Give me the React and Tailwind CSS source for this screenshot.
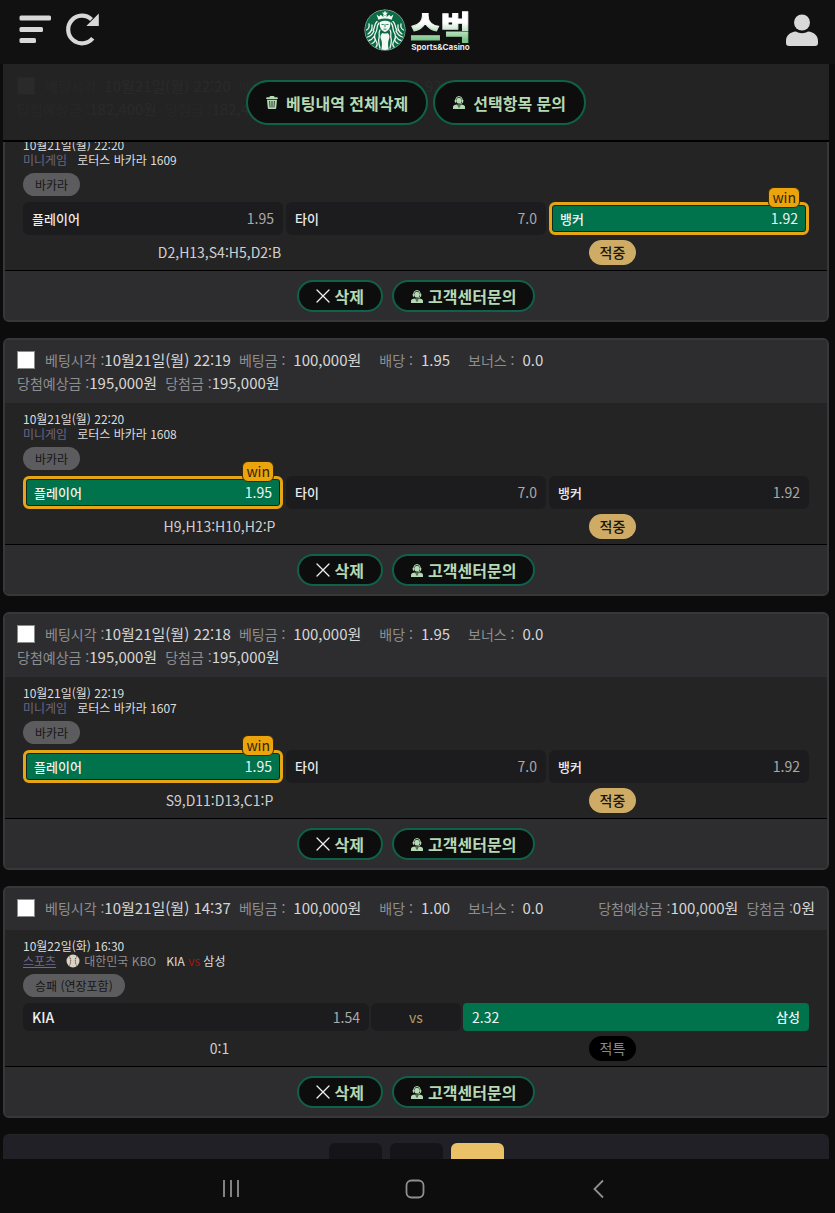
import React from "react";

const bets = [
  {
    id: "b1",
    placed: "10월21일(월) 22:20",
    stake: "95,000원",
    odds: "1.92",
    expected: "182,400원",
    paid: "182,400원",
    start: "10월21일(월) 22:20",
    round: "로터스 바카라 1609",
    winner: 2,
    score: "D2,H13,S4:H5,D2:B",
  },
  {
    id: "b2",
    placed: "10월21일(월) 22:19",
    stake: "100,000원",
    odds: "1.95",
    expected: "195,000원",
    paid: "195,000원",
    start: "10월21일(월) 22:20",
    round: "로터스 바카라 1608",
    winner: 0,
    score: "H9,H13:H10,H2:P",
  },
  {
    id: "b3",
    placed: "10월21일(월) 22:18",
    stake: "100,000원",
    odds: "1.95",
    expected: "195,000원",
    paid: "195,000원",
    start: "10월21일(월) 22:19",
    round: "로터스 바카라 1607",
    winner: 0,
    score: "S9,D11:D13,C1:P",
  },
  {
    id: "b4",
    sport: true,
    placed: "10월21일(월) 14:37",
    stake: "100,000원",
    odds: "1.00",
    expected: "100,000원",
    paid: "0원",
    start: "10월22일(화) 16:30",
    score: "0:1",
  },
];

const outcomes = [
  { name: "플레이어", odds: "1.95" },
  { name: "타이", odds: "7.0" },
  { name: "뱅커", odds: "1.92" },
];

function TrashIcon() {
  return (
    <svg width="12" height="13" viewBox="0 0 12 13" aria-hidden="true">
      <path
        fill="currentColor"
        fillRule="evenodd"
        d="M4 0h4l.6 1.2H11a.8.8 0 0 1 .8.8v1H.2V2a.8.8 0 0 1 .8-.8h2.4zM1 3.700h10l-.8 8.300a1 1 0 0 1-1 1H2.800a1 1 0 0 1-1-1zM3.300 5l.4 6.500h.7L4.100 5zm2.300 0v6.500h.8V5zm2.300 0-.3 6.500h.7L8.700 5z"
      />
    </svg>
  );
}

function AgentIcon() {
  return (
    <svg width="12" height="13" viewBox="0 0 12 13" aria-hidden="true">
      <path fill="none" stroke="currentColor" strokeWidth="1" d="M2.700 5V4a3.300 3.500 0 0 1 6.600 0v1" />
      <rect x="1.800" y="3.700" width="1.600" height="3" rx=".6" fill="currentColor" />
      <rect x="8.600" y="3.700" width="1.600" height="3" rx=".6" fill="currentColor" />
      <ellipse cx="6" cy="4.700" rx="2.500" ry="2.900" fill="currentColor" />
      <path fill="none" stroke="currentColor" strokeWidth=".8" d="M9.500 6.300c0 1.200-1 1.500-2.600 1.500" />
      <path fill="currentColor" d="M4.500 8.500 5.500 13H0v-1.900c0-1.500 1.300-2.300 4.500-2.600zM7.500 8.500 6.500 13H12v-1.900c0-1.500-1.300-2.300-4.500-2.600zM5.200 8.400h1.600l-.4 1.400.3 3.200H5.300l.3-3.200z" />
    </svg>
  );
}

function CloseIcon() {
  return (
    <svg width="14" height="14" viewBox="0 0 14 14" aria-hidden="true">
      <path d="m1 1 12 12M13 1 1 13" stroke="#f0f0f0" strokeWidth="1.300" strokeLinecap="round" />
    </svg>
  );
}

function BallIcon() {
  return (
    <svg width="14" height="14" viewBox="0 0 14 14" aria-hidden="true">
      <circle cx="7" cy="7" r="6.500" fill="#d9d2c6" />
      <path
        d="M3.200 2.300c2 2.800 2 6.600 0 9.400M10.800 2.300c-2 2.800-2 6.600 0 9.400"
        fill="none"
        stroke="#6b4a3c"
        strokeWidth="1"
        strokeDasharray="1.200 .6"
      />
    </svg>
  );
}

function Emblem() {
  return (
    <svg width="42" height="42" viewBox="0 0 42 42" aria-hidden="true">
      <circle cx="21" cy="21" r="20.500" fill="#b9d4c6" />
      <circle cx="21" cy="21" r="20" fill="#0c6a44" />
      <g fill="none" stroke="#eef5f0" strokeLinecap="round" strokeWidth="1.300">
        <path d="M15 14c-3 3-1 6-3 9s-2 6 0 9 1 5 0 6" />
        <path d="M27 14c3 3 1 6 3 9s2 6 0 9-1 5 0 6" />
        <path d="M16 21c-2 3 0 5-1 8s0 6 1 10" />
        <path d="M26 21c2 3 0 5 1 8s0 6-1 10" />
        <path d="M13 12.500c-3.500 3-1.500 6-4 9" />
        <path d="M29 12.500c3.500 3 1.500 6 4 9" />
        <path d="M2.500 21c2-1 3-3.500 2.500-6M4 25c3-2 4.500-5 4-9M3.500 28c3.500-1 5-3 6.500-6M5 31.500c2-.5 3.500-1.500 5-4M8 34.500c1.500-.5 2.500-1.500 3.500-3.500" />
        <path d="M39.500 21c-2-1-3-3.500-2.500-6M38 25c-3-2-4.500-5-4-9M38.500 28c-3.500-1-5-3-6.500-6M37 31.500c-2-.5-3.500-1.500-5-4M34 34.500c-1.500-.5-2.500-1.500-3.500-3.500" />
      </g>
      <path
        fill="#f3f8f5"
        d="m21 1.500.9 2.100 2.200.1-1.700 1.400.6 2.200-2-1.200-2 1.200.6-2.200-1.700-1.400 2.200-.1zM12.500 5.500l2.700 2 1.600-1.700 2.200 2 2-1.600 2 1.600 2.200-2 1.600 1.700 2.700-2-1.900 5.300c-4-1.600-9.200-1.600-13.200 0z"
      />
      <path fill="#f3f8f5" d="M16 13c3-1.800 7-1.800 10 0 .8 4-.2 8.300-5 10-4.800-1.700-5.800-6-5-10z" />
      <path d="M17.500 15.500h2.300M22.200 15.500h2.300M21 15v3.200M19.500 20.200h3" stroke="#0c6a44" strokeWidth=".8" fill="none" />
      <path fill="#f3f8f5" d="M18.500 24c1.500.8 3.500.8 5 0 2.700 2 2.200 5 1 7.500-.7 2.500-.5 6 .2 9.100-2.500.5-5 .5-7.400 0 .7-3.100.9-6.600.2-9.100-1.200-2.500-1.700-5.500 1-7.500z" />
    </svg>
  );
}

function Brand() {
  return (
    <a href="#home" aria-label="스벅 Sports&Casino" className="flex items-center gap-1">
      <Emblem />
      <span className="flex flex-col items-center">
        <span className="bg-linear-to-b from-white from-40% to-[#7cc68a] to-90% bg-clip-text text-[33px] leading-[34px] font-black text-transparent [-webkit-text-stroke:1px_transparent]">
          스벅
        </span>
        <span className="font-[Inter] text-[8px] leading-2 font-bold text-[#e8e8e8]">Sports&amp;Casino</span>
      </span>
    </a>
  );
}

function ActionButton({ icon, children, large }) {
  return (
    <button
      type="button"
      className={
        large
          ? "flex h-[45px] items-center gap-2 rounded-full border-2 border-[#0f6248] bg-[#0d0d0d] px-[18px] text-[16px] font-bold text-[#b5dab3]"
          : "flex h-8 items-center gap-[5px] rounded-full border-2 border-[#0f6248] bg-[#0d0d0d] px-[17px] text-[16px] font-bold text-[#b5dab3]"
      }
    >
      {icon}
      <span>{children}</span>
    </button>
  );
}

function Outcome({ name, odds, won }) {
  if (won) {
    return (
      <div className="relative flex items-center justify-between rounded-md border-3 border-[#e7a414] bg-[#00734c] px-2 text-[14px] text-[#f2f2f2] inset-ring inset-ring-[#10281f]">
        <span className="text-[13px] font-medium">{name}</span>
        <span>{odds}</span>
        <span className="absolute -top-[18px] right-[6px] flex h-[21px] items-center rounded-md border border-[#3a2a08] bg-[#eba40c] px-[3px] text-[14px] text-[#33230a]">
          win
        </span>
      </div>
    );
  }
  return (
    <div className="flex items-center justify-between rounded-md bg-[#1c1c1e] px-[9px] text-[14px] text-[#a9a9a9]">
      <span className="text-[13px] font-medium text-[#ececec]">{name}</span>
      <span>{odds}</span>
    </div>
  );
}

function Field({ label, value, spaced }) {
  return (
    <span className={spaced ? "flex h-[23px] items-baseline gap-2" : "flex h-[23px] items-baseline"}>
      <span className="text-[#8d8d8f]">{label} :</span>
      <span className="text-[15px] text-[#d6d6d6]">{value}</span>
    </span>
  );
}

function BetCard({ bet }) {
  return (
    <article className="shrink-0 overflow-hidden rounded-md border-2 border-[#38383a] bg-[#242424]">
      <header className="flex min-h-[42px] flex-wrap content-start justify-between gap-x-8 bg-[#2d2d2f] px-3 pt-2 pb-[9px] text-[14px] leading-[23px]">
        <div className="flex items-center">
          <input
            id={bet.id}
            type="checkbox"
            className="mr-[10px] size-[18px] appearance-none border border-[#8a8a8a] bg-white"
          />
          <label htmlFor={bet.id} className="mr-2">
            <Field label="베팅시각" value={bet.placed} />
          </label>
          <div className="flex gap-[18px]">
            <Field label="베팅금" value={bet.stake} spaced />
            <Field label="배당" value={bet.odds} spaced />
            <Field label="보너스" value="0.0" spaced />
          </div>
        </div>
        <div className="flex gap-2">
          <Field label="당첨예상금" value={bet.expected} />
          <Field label="당첨금" value={bet.paid} />
        </div>
      </header>

      <div className="flex flex-col border-b border-black px-[18px] pt-2 pb-[5px]">
        <p className="text-[12px] leading-[15px] text-[#dcdcdc]">{bet.start}</p>
        {bet.sport ? (
          <p className="flex items-center text-[12px] leading-[15px] text-[#dcdcdc]">
            <a href="#sports" className="mr-[10px] text-[#6f6a93] underline">스포츠</a>
            <BallIcon />
            <span className="mr-[10px] ml-1 text-[#8d8d8f]">대한민국 KBO</span>
            <span>KIA <span className="text-[#a51414]">vs</span> 삼성</span>
          </p>
        ) : (
          <p className="flex gap-[10px] text-[12px] leading-[15px] text-[#dcdcdc]">
            <span className="text-[#6a6684]">미니게임</span>
            <span>{bet.round}</span>
          </p>
        )}
        <span className="mt-[6px] flex h-[23px] items-center self-start rounded-full bg-[#5c5c5e] px-3 text-[12px] text-[#161616]">
          {bet.sport ? "승패 (연장포함)" : "바카라"}
        </span>

        {bet.sport ? (
          <div className="mt-[6px] grid h-7 grid-cols-[1fr_90px_1fr] gap-[2px] text-[14px]">
            <div className="flex items-center justify-between rounded-md bg-[#1c1c1e] px-[9px] text-[#a9a9a9]">
              <span className="font-medium text-[#ececec]">KIA</span>
              <span>1.54</span>
            </div>
            <div className="flex items-center justify-center rounded-md bg-[#1c1c1e] text-[#b59a63]">vs</div>
            <div className="flex items-center justify-between rounded-sm bg-[#00734c] px-[9px] text-[#f2f2f2]">
              <span>2.32</span>
              <span className="text-[13px] font-medium">삼성</span>
            </div>
          </div>
        ) : (
          <div className="mt-[6px] grid h-[33px] grid-cols-3 gap-[3px]">
            {outcomes.map((o, i) => (
              <Outcome key={o.name} name={o.name} odds={o.odds} won={bet.winner === i} />
            ))}
          </div>
        )}

        <div className="mt-[5px] grid h-[25px] grid-cols-2 place-items-center text-[14px] text-[#d0d0d0]">
          <span>{bet.score}</span>
          {bet.sport ? (
            <span className="flex h-[25px] items-center rounded-full bg-black px-[11px] text-[#8a8a8a]">적특</span>
          ) : (
            <span className="flex h-[25px] items-center rounded-full bg-[#ceac66] px-[11px] font-medium text-[#1b150b]">
              적중
            </span>
          )}
        </div>
      </div>

      <footer className="flex justify-center gap-[9px] bg-[#2d2d2f] pt-[9px] pb-2">
        <ActionButton icon={<CloseIcon />}>삭제</ActionButton>
        <ActionButton icon={<AgentIcon />}>고객센터문의</ActionButton>
      </footer>
    </article>
  );
}

export default function App() {
  return (
    <div
      lang="ko"
      className="flex h-dvh flex-col overflow-hidden bg-[#0c0c0c] font-['Noto_Sans_CJK_KR',sans-serif] text-[14px]"
    >
      <header className="grid h-16 shrink-0 grid-cols-3 items-center bg-[#111111] px-[17px] pb-1">
        <div className="flex items-center gap-[14px]">
          <button type="button" aria-label="메뉴">
            <svg width="34" height="34" viewBox="0 0 34 34" fill="#d8d8d8">
              <rect x="2.500" y="2.500" width="31.500" height="5" rx="1.500" />
              <rect x="2.500" y="14" width="23.500" height="5" rx="1.500" />
              <rect x="2.500" y="25" width="16.500" height="5" rx="1.500" />
            </svg>
          </button>
          <button type="button" aria-label="새로고침">
            <svg width="34" height="34" viewBox="0 0 34 34">
              <path d="M27.700 25.200A13.800 13.800 0 1 1 26.500 6.500" fill="none" stroke="#d8d8d8" strokeWidth="4.200" />
              <path d="M33.800.5v12.500H21.300z" fill="#d8d8d8" />
            </svg>
          </button>
        </div>
        <div className="flex justify-center">
          <Brand />
        </div>
        <button type="button" aria-label="내 정보" className="justify-self-end">
          <svg width="32" height="32" viewBox="0 0 32 32" fill="#d8d8d8">
            <circle cx="16" cy="8.500" r="8" />
            <path d="M10 17.500c3.500 2.300 8.500 2.300 12 0 6 .5 10 4.200 10 9.500v2a3 3 0 0 1-3 3H3a3 3 0 0 1-3-3v-2c0-5.300 4-9 10-9.500z" />
          </svg>
        </button>
      </header>

      <main className="relative min-h-0 flex-1 overflow-hidden">
        <div className="flex h-full flex-col gap-4 overflow-y-auto pr-[6px] pl-[3px] [scrollbar-width:none]">
          {bets.map((bet) => (
            <BetCard key={bet.id} bet={bet} />
          ))}
          <nav
            aria-label="페이지"
            className="flex shrink-0 justify-center gap-2 rounded-t-md border-t border-[#26262a] bg-[#202026] py-2"
          >
            <button type="button" aria-label="처음" className="h-11 w-[53px] rounded-md bg-[#151519]" />
            <button type="button" aria-label="이전" className="h-11 w-[53px] rounded-md bg-[#151519]" />
            <button type="button" aria-label="현재" className="h-11 w-[53px] rounded-md bg-[#ebc168]" />
          </nav>
        </div>
        <div className="absolute top-0 right-[6px] left-[3px] flex justify-center gap-[5px] border-b-2 border-black bg-[#232323]/97 pt-4 pb-[15px]">
          <ActionButton large icon={<TrashIcon />}>베팅내역 전체삭제</ActionButton>
          <ActionButton large icon={<AgentIcon />}>선택항목 문의</ActionButton>
        </div>
      </main>

      <nav aria-label="시스템" className="flex h-[54px] shrink-0 items-center justify-center gap-[164px] bg-[#0d0d0d] pt-[6px] pr-[5px]">
        <button type="button" aria-label="최근 앱">
          <svg width="20" height="20" viewBox="0 0 20 20" stroke="#8f8f8f" strokeWidth="1.800">
            <path d="M3 1v17M10 1v17M17 1v17" />
          </svg>
        </button>
        <button type="button" aria-label="홈">
          <svg width="20" height="20" viewBox="0 0 20 20" fill="none" stroke="#8f8f8f" strokeWidth="1.800">
            <rect x="1.500" y="1.500" width="17" height="17" rx="5" />
          </svg>
        </button>
        <button type="button" aria-label="뒤로">
          <svg width="20" height="20" viewBox="0 0 20 20" fill="none" stroke="#8f8f8f" strokeWidth="1.800">
            <path d="m14 1.500-8.500 8.500 8.500 8.500" />
          </svg>
        </button>
      </nav>
    </div>
  );
}
